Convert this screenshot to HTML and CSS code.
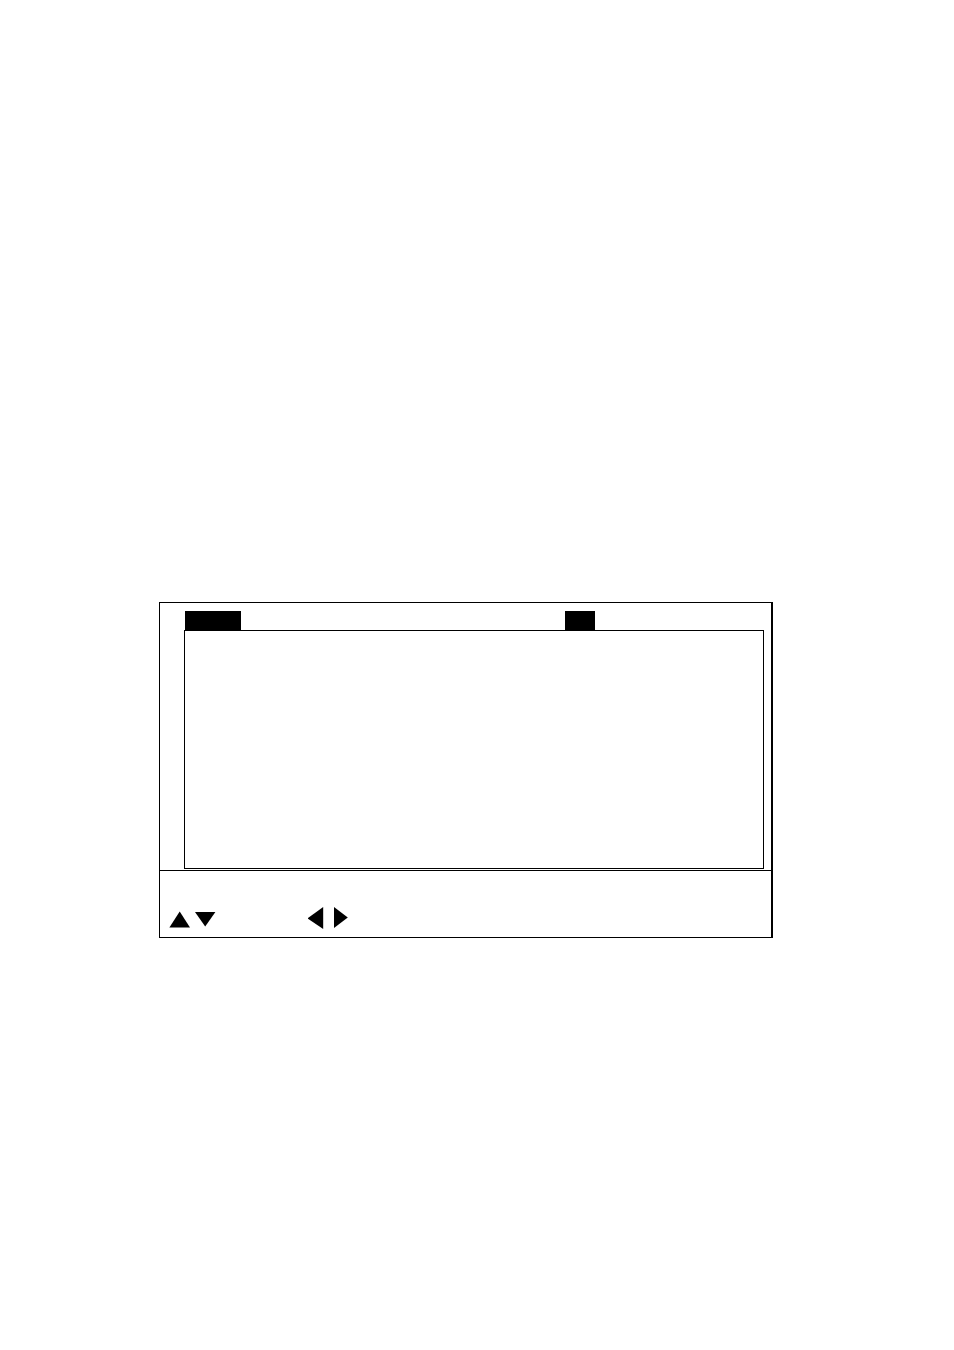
FILE: index.html
```
<!DOCTYPE html>
<html lang="en">
<head>
<meta charset="utf-8">
<meta name="viewport" content="width=device-width, initial-scale=1">
<title>Menu screen</title>
<link rel="stylesheet" href="styles.css">
</head>
<body>
<main class="page">
  <section class="screen" aria-label="Menu screen">
    <div class="workspace">
      <div class="tabs">
        <span class="tab tab-wide"></span>
        <span class="tab tab-narrow"></span>
      </div>
      <div class="panel"></div>
    </div>
    <footer class="keys">
      <div class="key-pair vertical">
        <button class="key" type="button" aria-label="Up"><svg width="21" height="22" viewBox="0 0 21 22"><path d="M10.7 4.5 L21 20.5 H.4 Z"/></svg></button>
        <button class="key" type="button" aria-label="Down"><svg width="21" height="22" viewBox="0 0 21 22"><path d="M0 5 H20.4 L10.2 19.4 Z"/></svg></button>
      </div>
      <div class="key-pair horizontal">
        <button class="key" type="button" aria-label="Left"><svg width="16" height="22" viewBox="0 0 16 22"><path d="M15.2 0 V22 L-.5 11.3 Z"/></svg></button>
        <button class="key" type="button" aria-label="Right"><svg width="14" height="22" viewBox="0 0 14 22"><path d="M0 0 V21 L13.8 10.4 Z"/></svg></button>
      </div>
    </footer>
  </section>
</main>
</body>
</html>
```
FILE: styles.css
```
* {
  box-sizing: border-box;
}

body {
  margin: 0;
  background: #fff;
  color: #000;
  font-family: "Liberation Sans", Arial, sans-serif;
}

.page {
  min-height: 100vh;
  padding: 602px 181px 0 159px;
}

.screen {
  border: 1px solid #000;
  border-right-width: 2px;
}

.workspace {
  padding: 8px 7px 1px 24px;
  border-bottom: 1px solid #000;
}

.tabs {
  display: flex;
  gap: 324px;
  padding-left: 1px;
}

.tab {
  height: 19px;
  background: #000;
}

.tab-wide {
  width: 56px;
}

.tab-narrow {
  width: 30px;
}

.panel {
  min-height: 239px;
  border: 1px solid #000;
}

.keys {
  display: flex;
  gap: 92px;
  padding: 36px 9px 8px;
}

.key-pair {
  display: flex;
}

.vertical {
  gap: 5px;
}

.horizontal {
  gap: 10px;
}

.key {
  display: block;
  padding: 0;
  border: 0;
  background: none;
  color: inherit;
}

.key svg {
  display: block;
  fill: currentColor;
}
```
